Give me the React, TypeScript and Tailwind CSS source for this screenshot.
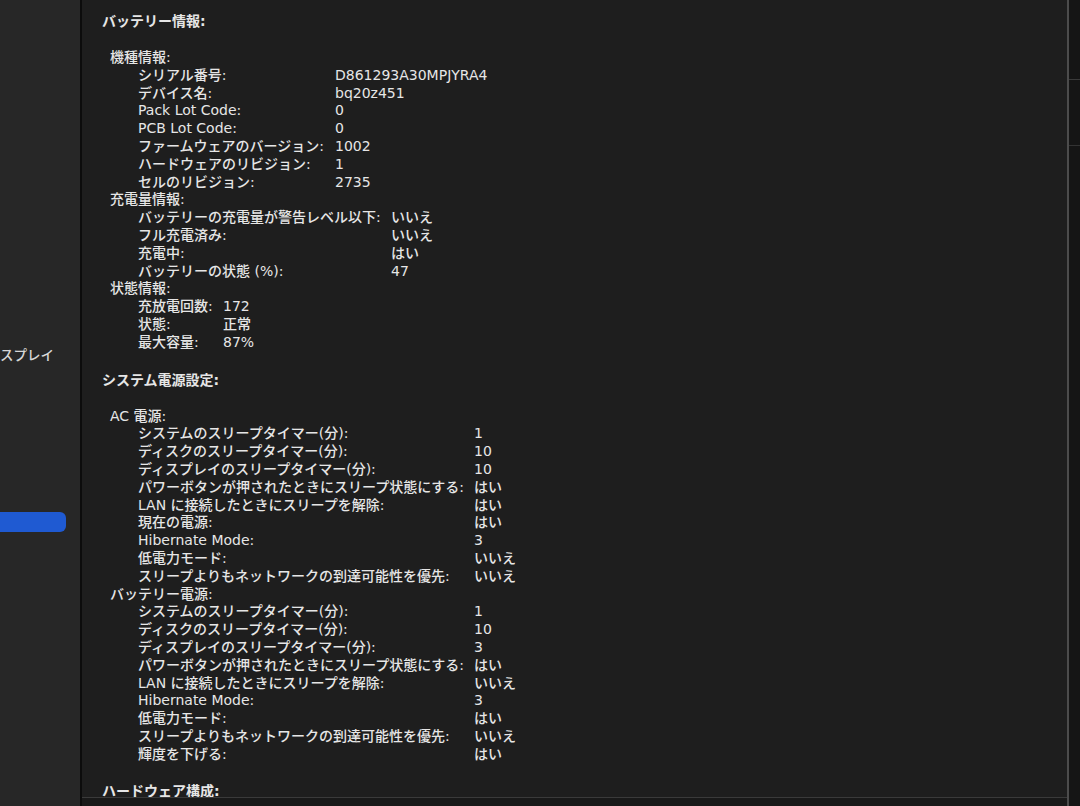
const font = { fontFamily: '"DejaVu Sans", "Noto Sans CJK JP", sans-serif' }

type Row = [string, string]

function Group({ title, labelW, rows }: { title: string; labelW: string; rows: Row[] }) {
  return (
    <div>
      <div className="pl-[8px] h-[17.8px] leading-[17.8px]">{title}</div>
      {rows.map(([label, value], i) => (
        <div key={i} className="flex pl-[36px] h-[17.8px] leading-[17.8px]">
          <span className={`${labelW} shrink-0 whitespace-nowrap`}>{label}</span>
          <span className="whitespace-nowrap">{value}</span>
        </div>
      ))}
    </div>
  )
}

function Heading({ children }: { children: string }) {
  return <div className="h-[18px] leading-[18px] font-bold mb-[19px]">{children}</div>
}

export default function App() {
  return (
    <div className="w-[1080px] h-[806px] overflow-hidden flex bg-[#1e1e1e] text-[#e6e6e6] text-[14px] font-medium" style={font}>
      {/* sidebar */}
      <div className="w-[80px] shrink-0 bg-[#272727] flex flex-col">
        <div className="h-[343px]" />
        <div className="h-[24px] leading-[24px] text-[13.5px] text-[#d6d6d6] whitespace-nowrap">スプレイ</div>
        <div className="h-[145px]" />
        <div className="w-[66px] h-[20px] rounded-r-[6px] bg-[#1f5ad2]" />
      </div>
      <div className="w-[2px] shrink-0 bg-[#0c0c0c]" />

      {/* main */}
      <div className="flex-1 flex flex-col min-w-0">
        <div className="h-[797px] overflow-hidden pl-[20px] pt-[12px]">
          <Heading>バッテリー情報:</Heading>
          <Group
            title="機種情報:"
            labelW="w-[197px]"
            rows={[
              ['シリアル番号:', 'D861293A30MPJYRA4'],
              ['デバイス名:', 'bq20z451'],
              ['Pack Lot Code:', '0'],
              ['PCB Lot Code:', '0'],
              ['ファームウェアのバージョン:', '1002'],
              ['ハードウェアのリビジョン:', '1'],
              ['セルのリビジョン:', '2735'],
            ]}
          />
          <Group
            title="充電量情報:"
            labelW="w-[253px]"
            rows={[
              ['バッテリーの充電量が警告レベル以下:', 'いいえ'],
              ['フル充電済み:', 'いいえ'],
              ['充電中:', 'はい'],
              ['バッテリーの状態 (%):', '47'],
            ]}
          />
          <Group
            title="状態情報:"
            labelW="w-[85px]"
            rows={[
              ['充放電回数:', '172'],
              ['状態:', '正常'],
              ['最大容量:', '87%'],
            ]}
          />
          <div className="h-[19px]" />
          <Heading>システム電源設定:</Heading>
          <Group
            title="AC 電源:"
            labelW="w-[336px]"
            rows={[
              ['システムのスリープタイマー(分):', '1'],
              ['ディスクのスリープタイマー(分):', '10'],
              ['ディスプレイのスリープタイマー(分):', '10'],
              ['パワーボタンが押されたときにスリープ状態にする:', 'はい'],
              ['LAN に接続したときにスリープを解除:', 'はい'],
              ['現在の電源:', 'はい'],
              ['Hibernate Mode:', '3'],
              ['低電力モード:', 'いいえ'],
              ['スリープよりもネットワークの到達可能性を優先:', 'いいえ'],
            ]}
          />
          <Group
            title="バッテリー電源:"
            labelW="w-[336px]"
            rows={[
              ['システムのスリープタイマー(分):', '1'],
              ['ディスクのスリープタイマー(分):', '10'],
              ['ディスプレイのスリープタイマー(分):', '3'],
              ['パワーボタンが押されたときにスリープ状態にする:', 'はい'],
              ['LAN に接続したときにスリープを解除:', 'いいえ'],
              ['Hibernate Mode:', '3'],
              ['低電力モード:', 'はい'],
              ['スリープよりもネットワークの到達可能性を優先:', 'いいえ'],
              ['輝度を下げる:', 'はい'],
            ]}
          />
          <div className="h-[19px]" />
          <Heading>ハードウェア構成:</Heading>
        </div>
        <div className="h-[1px] bg-[#3a3a3a]" />
        <div className="flex-1 bg-[#191919]" />
      </div>

      {/* right edge */}
      <div className="w-[2px] shrink-0 bg-[#4c4c4c]" />
      <div className="w-[11px] shrink-0 bg-[#151515] flex flex-col">
        <div className="h-[79px]" />
        <div className="h-[1px] bg-[#3a3a3a]" />
        <div className="h-[65px]" />
        <div className="h-[1px] bg-[#333333]" />
      </div>
    </div>
  )
}
